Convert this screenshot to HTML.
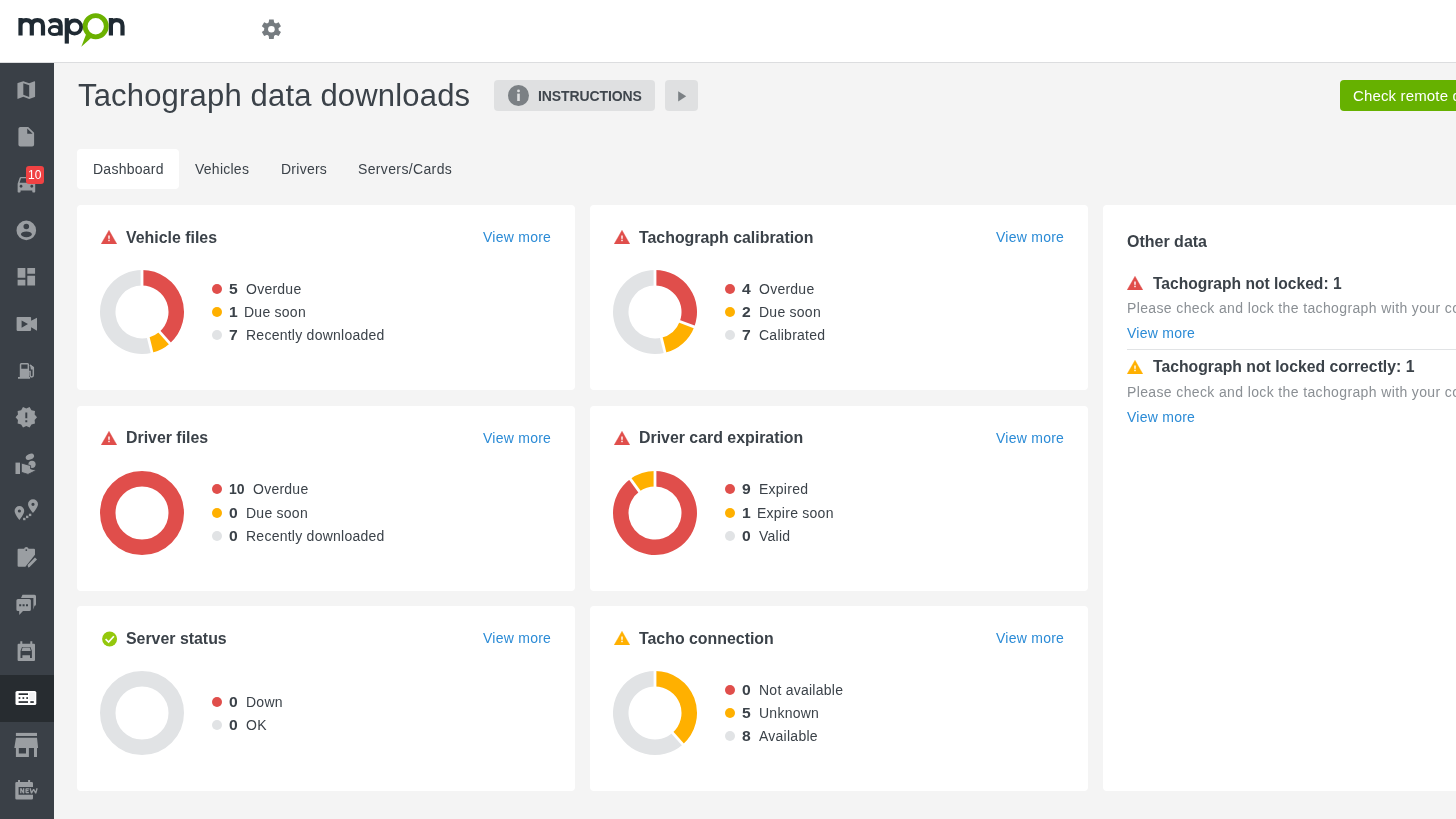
<!DOCTYPE html>
<html><head><meta charset="utf-8">
<style>
*{box-sizing:border-box;margin:0;padding:0}
html,body{width:1456px;height:819px;overflow:hidden;background:#f4f4f4;font-family:"Liberation Sans",sans-serif;color:#3b4249}
.abs{position:absolute}
#hdr{position:absolute;left:0;top:0;width:1456px;height:63px;background:#fff;border-bottom:1px solid #dcdddf}
#side{position:absolute;left:0;top:63px;width:54px;height:756px;background:#3a4047}
#active{position:absolute;left:0;top:675px;width:54px;height:47px;background:#272c30}
.t{position:absolute;white-space:nowrap;line-height:1;will-change:transform}
.card{position:absolute;background:#fff;border-radius:4px;width:498px;height:185px;overflow:hidden}
.vm{font-size:14px;color:#2b8bd6;letter-spacing:.25px}
.grey{font-size:14px;color:#8a8f94;letter-spacing:.37px}
.donut{position:absolute;left:22.4px;top:64px}
.si{position:absolute;left:0;width:54px;height:30px}
</style></head>
<body>
<div id="hdr"></div>

<!-- logo -->
<svg class="abs" style="left:0;top:0" width="140" height="60" viewBox="0 0 140 60">
<g fill="none" stroke="#1f2a33" stroke-width="4.2">
<path d="M20.5 35.5V18.1M20.5 26C20.5 21.5 23 20.2 26.15 20.2S31.8 21.5 31.8 26V35.5M31.8 26C31.8 21.5 34.3 20.2 37.4 20.2S43 21.5 43 26V35.5"/>
<path d="M49.3 22C51 20.7 53 20.2 55 20.2C58.7 20.2 60.65 22 60.65 25.5V35.5"/>
<path d="M66.8 18.1V43.6"/>
<path d="M110.9 35.5V18.1M110.9 26C110.9 21.5 113.4 20.2 116.6 20.2S122.5 21.5 122.5 26V35.5"/>
</g>
<ellipse cx="54.6" cy="30.6" rx="5.3" ry="4" fill="none" stroke="#1f2a33" stroke-width="3"/>
<circle cx="74.6" cy="27.1" r="6.6" fill="none" stroke="#1f2a33" stroke-width="3.8"/>
<path d="M86 34.5L81.3 46.7L91 38Z" fill="#6bb100"/>
<circle cx="95.7" cy="26.3" r="10.6" fill="none" stroke="#6bb100" stroke-width="4.8"/>
</svg>

<!-- gear -->
<svg class="abs" style="left:261px;top:19px" width="21" height="21" viewBox="0 0 21 21">
<g transform="translate(10.4 10.2)" fill="#767c80">
<circle r="7.2"/>
<path d="M-2.3 -9.7H2.3L2.9 -5H-2.9ZM-2.3 9.7H2.3L2.9 5H-2.9Z"/>
<path d="M-2.3 -9.7H2.3L2.9 -5H-2.9ZM-2.3 9.7H2.3L2.9 5H-2.9Z" transform="rotate(60)"/>
<path d="M-2.3 -9.7H2.3L2.9 -5H-2.9ZM-2.3 9.7H2.3L2.9 5H-2.9Z" transform="rotate(120)"/>
<circle r="3.3" fill="#fff"/>
</g>
</svg>

<div id="side"></div>
<div id="active"></div>

<!-- sidebar icons -->
<svg class="abs" style="left:0;top:63px" width="54" height="756" viewBox="0 63 54 756">
<g fill="#9a9ea2">
<!-- 0 map -->
<path transform="translate(14.5 78.3) scale(0.98)" d="M20.5 3l-.16.03L15 5.1 9 3 3.36 4.9c-.21.07-.36.25-.36.48V20.5c0 .28.22.5.5.5l.16-.03L9 18.9l6 2.1 5.64-1.9c.21-.07.36-.25.36-.48V3.5c0-.28-.22-.5-.5-.5zM15 19l-6-2.11V5l6 2.11V19z"/>
<!-- 1 file -->
<path transform="translate(14.5 125) scale(0.98)" d="M6 2c-1.1 0-1.99.9-1.99 2L4 20c0 1.1.89 2 1.99 2H18c1.1 0 2-.9 2-2V8l-6-6H6zm7 7V3.5L18.5 9H13z"/>
<!-- 2 car -->
<path transform="translate(14.7 172) scale(0.977)" d="M18.92 6.01C18.72 5.42 18.16 5 17.5 5h-11c-.66 0-1.21.42-1.42 1.01L3 12v8c0 .55.45 1 1 1h1c.55 0 1-.45 1-1v-1h12v1c0 .55.45 1 1 1h1c.55 0 1-.45 1-1v-8l-2.08-5.99zM6.5 16c-.83 0-1.5-.67-1.5-1.5S5.67 13 6.5 13s1.5.67 1.5 1.5S7.33 16 6.5 16zm11 0c-.83 0-1.5-.67-1.5-1.5s.67-1.5 1.5-1.5 1.5.67 1.5 1.5-.67 1.5-1.5 1.5zM5 11l1.5-4.5h11L19 11H5z"/>
<!-- 3 account -->
<path fill-rule="evenodd" d="M26.3 220.6a9.8 9.8 0 1 1 0 19.6a9.8 9.8 0 1 1 0-19.6zM26.3 223.7a2.8 2.8 0 1 0 0 5.6a2.8 2.8 0 1 0 0-5.6zM26.4 231.4a5.5 2.9 0 1 0 0 5.8a5.5 2.9 0 1 0 0-5.8z"/>
<!-- 4 dashboard -->
<path transform="translate(14.7 265.1) scale(0.97)" d="M3 13h8V3H3v10zm0 8h8v-6H3v6zm10 0h8V11h-8v10zm0-18v6h8V3h-8z"/>
<!-- 5 video -->
<path fill-rule="evenodd" d="M17.4 317h12.9a0.8 0.8 0 0 1 .8.8v3L37 317.8V330.7L31.1 327.3v2.8a.8.8 0 0 1-.8.8H17.4a.8.8 0 0 1-.8-.8V317.8a.8.8 0 0 1 .8-.8zM21.6 320.5V327.7L28 324.1Z"/>
<!-- 6 fuel -->
<path fill-rule="evenodd" d="M21.3 363h6.3a1.5 1.5 0 0 1 1.5 1.5V377h1V378.8H18V377h1.8V364.5a1.5 1.5 0 0 1 1.5-1.5zM21.3 364.5V368.8H27.6V364.5Z"/>
<path d="M29.9 365L33.3 367.6V375.3a1.6 1.6 0 0 1-3.2 0V371.5H29.1" fill="none" stroke="#9a9ea2" stroke-width="1.5"/>
<path d="M30.2 364.6L34 367.3V369.5L30.8 369.5Z"/>
<!-- 7 badge -->
<path transform="translate(14.6 405.6) scale(0.975)" d="M23 12l-2.44-2.78.34-3.68-3.61-.82-1.89-3.18L12 3 8.6 1.54 6.71 4.72l-3.61.81.34 3.68L1 12l2.44 2.78-.34 3.69 3.61.82 1.89 3.18L12 21l3.4 1.46 1.89-3.18 3.61-.82-.34-3.68L23 12zm-10 5h-2v-2h2v2zm0-4h-2V7h2v6z"/>
<!-- 8 hand coin -->
<rect x="15.5" y="462.6" width="4.5" height="11.4"/>
<circle cx="32" cy="464.3" r="3.6"/>
<path d="M21.3 463L30.6 465.6V468.8L36.4 470.3L28 474.4L21.3 472.3Z" stroke="#3a4047" stroke-width="0.9"/>
<ellipse cx="29.9" cy="456.8" rx="4.4" ry="2.8" transform="rotate(-25 29.9 456.8)"/>
<!-- 9 pins -->
<path fill-rule="evenodd" d="M19.4 506.1a4.8 4.8 0 0 1 4.8 4.8c0 3-4.8 9.1-4.8 9.1s-4.8-6.1-4.8-9.1a4.8 4.8 0 0 1 4.8-4.8zM19.4 509.4a1.6 1.6 0 1 0 0 3.2a1.6 1.6 0 1 0 0-3.2z"/>
<path fill-rule="evenodd" d="M33 499.3a5 5 0 0 1 5 5c0 3.1-5 8.7-5 8.7s-5-5.6-5-8.7a5 5 0 0 1 5-5zM33 502.7a1.6 1.6 0 1 0 0 3.2a1.6 1.6 0 1 0 0-3.2z"/>
<rect x="23.1" y="517.8" width="2.4" height="2.4"/>
<rect x="26" y="515.7" width="2.4" height="2.4"/>
<rect x="28.9" y="513.7" width="2.4" height="2.4"/>
<!-- 10 clipboard -->
<path fill-rule="evenodd" d="M18.6 548.8H24.1a2.3 2.3 0 0 1 4.5 0H34a1 1 0 0 1 1 1V554.7L25.4 566.8H18.6a1 1 0 0 1-1-1V549.8a1 1 0 0 1 1-1zM26.3 549.2a.9 .9 0 1 0 0 1.8a.9 .9 0 1 0 0-1.8z"/>
<path d="M28.2 567.4L27.6 565L35 557.6L37 559.6L29.6 567Z"/>
<!-- 11 chat -->
<path d="M22.5 594.8H34.5a1.5 1.5 0 0 1 1.5 1.5V604.2a1.5 1.5 0 0 1-1.5 1.5L33.4 609.7V597.9H21Z"/>
<path fill-rule="evenodd" d="M18 598.9H29.3a1.6 1.6 0 0 1 1.6 1.6V609.4a1.6 1.6 0 0 1-1.6 1.6H23L19.2 615V611H18a1.6 1.6 0 0 1-1.6-1.6V600.5a1.6 1.6 0 0 1 1.6-1.6zM19.2 604.2v2h2v-2zM22.6 604.2v2h2v-2zM26 604.2v2h2v-2z"/>
<!-- 12 calendar car -->
<path fill-rule="evenodd" d="M18.6 643.8H20.3V641.3H22.3V643.8H30.3V641.3H32.3V643.8H34a1 1 0 0 1 1 1V660a1 1 0 0 1-1 1H18.6a1 1 0 0 1-1-1V644.8a1 1 0 0 1 1-1zM22 646.9L20.5 651V658H22.4V655.2H30V658H31.9V651L30.4 646.9Z"/>
<path d="M22.6 647.6H29.8L30.8 651H21.6Z"/>
<!-- 14 store -->
<rect x="15.9" y="732.9" width="21.1" height="3.1"/>
<path fill-rule="evenodd" d="M16 737.8H37L38.1 747.9H37V757H34V747.9H28.9V757H15.9V747.9H14.3ZM18.8 747.9V753.4H26V747.9Z"/>
<!-- 15 new calendar -->
<path fill-rule="evenodd" d="M16.6 782H18V779.9H20V782H28.1V779.9H30.1V782H31.7a1.3 1.3 0 0 1 1.3 1.3V786.9H18.6V794.7H33V798.3a1.3 1.3 0 0 1-1.3 1.3H16.6a1.3 1.3 0 0 1-1.3-1.3V783.3a1.3 1.3 0 0 1 1.3-1.3z"/>
<path d="M20.8 793.2V788.2L23.6 793.2V788.2M28.9 788.85H26.05V792.55H28.9M26.05 790.7H28.5M30.1 788.2L31.5 793.2L33.6 789.2L35.7 793.2L37.1 788.2" fill="none" stroke="#9a9ea2" stroke-width="1.3" stroke-linejoin="bevel"/>
</g>
<!-- 13 card active -->
<rect x="15.5" y="691" width="20.8" height="14" rx="1.6" fill="#fff"/>
<rect x="29" y="692.5" width="5.8" height="7.5" fill="#f1f2f3"/>
<g fill="#272c30">
<rect x="18.6" y="693.3" width="9.4" height="1.7"/>
<rect x="18.6" y="697.2" width="1.7" height="1.7"/>
<rect x="22.5" y="697.2" width="1.7" height="1.7"/>
<rect x="26.3" y="697.2" width="1.7" height="1.7"/>
<rect x="18.6" y="701.2" width="9.4" height="1.7"/>
<rect x="30.3" y="701.2" width="3.5" height="1.7"/>
</g>
</svg>
<!-- badge -->
<div class="abs" style="left:26px;top:166px;width:18px;height:18px;border-radius:3px;background:#f04243"></div>
<div class="t" style="left:28.2px;top:168.6px;font-size:12px;color:#fff">10</div>

<!-- title -->
<div class="t" style="left:78px;top:80.46px;font-size:31px;letter-spacing:.18px;color:#3b4249">Tachograph data downloads</div>

<!-- instructions button -->
<div class="abs" style="left:494px;top:80px;width:161px;height:31px;background:#dfe0e1;border-radius:4px"></div>
<div class="abs" style="left:665px;top:80px;width:33px;height:31px;background:#dfe0e1;border-radius:4px"></div>
<svg class="abs" style="left:507.5px;top:85px" width="21" height="21" viewBox="0 0 21 21">
<circle cx="10.5" cy="10.5" r="10.5" fill="#7b8084"/>
<rect x="9.2" y="8.6" width="2.6" height="7.4" fill="#dfe0e1"/>
<circle cx="10.5" cy="5.9" r="1.4" fill="#dfe0e1"/>
</svg>
<div class="t" style="left:538px;top:88.95px;font-size:14px;font-weight:700;color:#3f464d;letter-spacing:-.1px">INSTRUCTIONS</div>
<svg class="abs" style="left:678px;top:90.5px" width="9" height="11" viewBox="0 0 9 11"><path d="M0.2 0.2L8.2 5.3L0.2 10.4Z" fill="#7b8084"/></svg>

<!-- green button -->
<div class="abs" style="left:1340px;top:80px;width:160px;height:31px;background:#66b100;border-radius:4px"></div>
<div class="t" style="left:1352.5px;top:88.1px;font-size:15px;letter-spacing:.15px;color:#fff">Check remote data</div>

<!-- tabs -->
<div class="abs" style="left:77px;top:149px;width:102px;height:40px;background:#fff;border-radius:4px"></div>
<div class="t" style="left:93px;top:162.35px;font-size:14px;letter-spacing:.25px;color:#3b4249">Dashboard</div>
<div class="t" style="left:195px;top:162.35px;font-size:14px;letter-spacing:.25px;color:#3b4249">Vehicles</div>
<div class="t" style="left:280.5px;top:162.35px;font-size:14px;letter-spacing:.25px;color:#3b4249">Drivers</div>
<div class="t" style="left:357.5px;top:162.35px;font-size:14px;letter-spacing:.36px;color:#3b4249">Servers/Cards</div>

<div class="card" style="left:77px;top:205px">
<svg class="abs" style="left:24px;top:25px" width="16" height="14" viewBox="0 0 16 14"><path d="M8 0.3L15.8 13.9H0.2Z" fill="#e04e4b" stroke="#e04e4b" stroke-width="0.4" stroke-linejoin="round"/><rect x="7.3" y="5.5" width="1.4" height="3.3" fill="#fff"/><rect x="7.3" y="9.7" width="1.4" height="1.5" fill="#fff"/></svg>
<div class="t" style="left:49px;top:24.74px;font-size:15.9px;font-weight:700;color:#3b4249">Vehicle files</div>
<div class="t vm" style="right:24px;top:25.45px">View more</div>
<svg class="donut" width="86" height="86" viewBox="0 0 86 86"><path d="M43.00 1.00A42 42 0 0 1 70.85 74.44L60.57 62.84A26.5 26.5 0 0 0 43.00 16.50Z" fill="#e04e4b"/><path d="M70.85 74.44A42 42 0 0 1 53.05 83.78L49.34 68.73A26.5 26.5 0 0 0 60.57 62.84Z" fill="#ffb000"/><path d="M53.05 83.78A42 42 0 1 1 43.00 1.00L43.00 16.50A26.5 26.5 0 1 0 49.34 68.73Z" fill="#e1e3e5"/><line x1="43.00" y1="18.50" x2="43.00" y2="-1.00" stroke="#fff" stroke-width="2.8"/><line x1="59.25" y1="61.34" x2="72.18" y2="75.93" stroke="#fff" stroke-width="2.8"/><line x1="48.86" y1="66.79" x2="53.53" y2="85.72" stroke="#fff" stroke-width="2.8"/></svg>
<div class="abs" style="left:134.7px;top:78.5px;width:10px;height:10px;border-radius:50%;background:#e04e4b"></div>
<div class="t" style="left:152.3px;top:76.55px;font-size:14px;font-weight:700;color:#3b4249;transform:scaleX(1.12);transform-origin:0 0">5</div>
<div class="t" style="left:168.5px;top:76.55px;font-size:14px;letter-spacing:.25px;color:#3b4249">Overdue</div>
<div class="abs" style="left:134.7px;top:102px;width:10px;height:10px;border-radius:50%;background:#ffb000"></div>
<div class="t" style="left:152.3px;top:100.05px;font-size:14px;font-weight:700;color:#3b4249;transform:scaleX(1.12);transform-origin:0 0">1</div>
<div class="t" style="left:166.5px;top:100.05px;font-size:14px;letter-spacing:.25px;color:#3b4249">Due soon</div>
<div class="abs" style="left:134.7px;top:125.4px;width:10px;height:10px;border-radius:50%;background:#e1e3e5"></div>
<div class="t" style="left:152.3px;top:123.45px;font-size:14px;font-weight:700;color:#3b4249;transform:scaleX(1.12);transform-origin:0 0">7</div>
<div class="t" style="left:168.5px;top:123.45px;font-size:14px;letter-spacing:.25px;color:#3b4249">Recently downloaded</div>
</div>
<div class="card" style="left:590px;top:205px">
<svg class="abs" style="left:24px;top:25px" width="16" height="14" viewBox="0 0 16 14"><path d="M8 0.3L15.8 13.9H0.2Z" fill="#e04e4b" stroke="#e04e4b" stroke-width="0.4" stroke-linejoin="round"/><rect x="7.3" y="5.5" width="1.4" height="3.3" fill="#fff"/><rect x="7.3" y="9.7" width="1.4" height="1.5" fill="#fff"/></svg>
<div class="t" style="left:49px;top:24.74px;font-size:15.9px;font-weight:700;color:#3b4249">Tachograph calibration</div>
<div class="t vm" style="right:24px;top:25.45px">View more</div>
<svg class="donut" width="86" height="86" viewBox="0 0 86 86"><path d="M43.00 1.00A42 42 0 0 1 82.27 57.89L67.78 52.40A26.5 26.5 0 0 0 43.00 16.50Z" fill="#e04e4b"/><path d="M82.27 57.89A42 42 0 0 1 53.05 83.78L49.34 68.73A26.5 26.5 0 0 0 67.78 52.40Z" fill="#ffb000"/><path d="M53.05 83.78A42 42 0 1 1 43.00 1.00L43.00 16.50A26.5 26.5 0 1 0 49.34 68.73Z" fill="#e1e3e5"/><line x1="43.00" y1="18.50" x2="43.00" y2="-1.00" stroke="#fff" stroke-width="2.8"/><line x1="65.91" y1="51.69" x2="84.14" y2="58.60" stroke="#fff" stroke-width="2.8"/><line x1="48.86" y1="66.79" x2="53.53" y2="85.72" stroke="#fff" stroke-width="2.8"/></svg>
<div class="abs" style="left:134.7px;top:78.5px;width:10px;height:10px;border-radius:50%;background:#e04e4b"></div>
<div class="t" style="left:152.3px;top:76.55px;font-size:14px;font-weight:700;color:#3b4249;transform:scaleX(1.12);transform-origin:0 0">4</div>
<div class="t" style="left:168.5px;top:76.55px;font-size:14px;letter-spacing:.25px;color:#3b4249">Overdue</div>
<div class="abs" style="left:134.7px;top:102px;width:10px;height:10px;border-radius:50%;background:#ffb000"></div>
<div class="t" style="left:152.3px;top:100.05px;font-size:14px;font-weight:700;color:#3b4249;transform:scaleX(1.12);transform-origin:0 0">2</div>
<div class="t" style="left:168.5px;top:100.05px;font-size:14px;letter-spacing:.25px;color:#3b4249">Due soon</div>
<div class="abs" style="left:134.7px;top:125.4px;width:10px;height:10px;border-radius:50%;background:#e1e3e5"></div>
<div class="t" style="left:152.3px;top:123.45px;font-size:14px;font-weight:700;color:#3b4249;transform:scaleX(1.12);transform-origin:0 0">7</div>
<div class="t" style="left:168.5px;top:123.45px;font-size:14px;letter-spacing:.25px;color:#3b4249">Calibrated</div>
</div>
<div class="card" style="left:77px;top:405.5px">
<svg class="abs" style="left:24px;top:25px" width="16" height="14" viewBox="0 0 16 14"><path d="M8 0.3L15.8 13.9H0.2Z" fill="#e04e4b" stroke="#e04e4b" stroke-width="0.4" stroke-linejoin="round"/><rect x="7.3" y="5.5" width="1.4" height="3.3" fill="#fff"/><rect x="7.3" y="9.7" width="1.4" height="1.5" fill="#fff"/></svg>
<div class="t" style="left:49px;top:24.74px;font-size:15.9px;font-weight:700;color:#3b4249">Driver files</div>
<div class="t vm" style="right:24px;top:25.45px">View more</div>
<svg class="donut" width="86" height="86" viewBox="0 0 86 86"><circle cx="43" cy="43" r="34.25" fill="none" stroke="#e04e4b" stroke-width="15.5"/></svg>
<div class="abs" style="left:134.7px;top:78.5px;width:10px;height:10px;border-radius:50%;background:#e04e4b"></div>
<div class="t" style="left:152.3px;top:76.55px;font-size:14px;font-weight:700;color:#3b4249">10</div>
<div class="t" style="left:175.5px;top:76.55px;font-size:14px;letter-spacing:.25px;color:#3b4249">Overdue</div>
<div class="abs" style="left:134.7px;top:102px;width:10px;height:10px;border-radius:50%;background:#ffb000"></div>
<div class="t" style="left:152.3px;top:100.05px;font-size:14px;font-weight:700;color:#3b4249;transform:scaleX(1.12);transform-origin:0 0">0</div>
<div class="t" style="left:168.5px;top:100.05px;font-size:14px;letter-spacing:.25px;color:#3b4249">Due soon</div>
<div class="abs" style="left:134.7px;top:125.4px;width:10px;height:10px;border-radius:50%;background:#e1e3e5"></div>
<div class="t" style="left:152.3px;top:123.45px;font-size:14px;font-weight:700;color:#3b4249;transform:scaleX(1.12);transform-origin:0 0">0</div>
<div class="t" style="left:168.5px;top:123.45px;font-size:14px;letter-spacing:.25px;color:#3b4249">Recently downloaded</div>
</div>
<div class="card" style="left:590px;top:405.5px">
<svg class="abs" style="left:24px;top:25px" width="16" height="14" viewBox="0 0 16 14"><path d="M8 0.3L15.8 13.9H0.2Z" fill="#e04e4b" stroke="#e04e4b" stroke-width="0.4" stroke-linejoin="round"/><rect x="7.3" y="5.5" width="1.4" height="3.3" fill="#fff"/><rect x="7.3" y="9.7" width="1.4" height="1.5" fill="#fff"/></svg>
<div class="t" style="left:49px;top:24.74px;font-size:15.9px;font-weight:700;color:#3b4249">Driver card expiration</div>
<div class="t vm" style="right:24px;top:25.45px">View more</div>
<svg class="donut" width="86" height="86" viewBox="0 0 86 86"><path d="M43.00 1.00A42 42 0 1 1 18.31 9.02L27.42 21.56A26.5 26.5 0 1 0 43.00 16.50Z" fill="#e04e4b"/><path d="M18.31 9.02A42 42 0 0 1 43.00 1.00L43.00 16.50A26.5 26.5 0 0 0 27.42 21.56Z" fill="#ffb000"/><line x1="43.00" y1="18.50" x2="43.00" y2="-1.00" stroke="#fff" stroke-width="2.8"/><line x1="28.60" y1="23.18" x2="17.14" y2="7.40" stroke="#fff" stroke-width="2.8"/></svg>
<div class="abs" style="left:134.7px;top:78.5px;width:10px;height:10px;border-radius:50%;background:#e04e4b"></div>
<div class="t" style="left:152.3px;top:76.55px;font-size:14px;font-weight:700;color:#3b4249;transform:scaleX(1.12);transform-origin:0 0">9</div>
<div class="t" style="left:168.5px;top:76.55px;font-size:14px;letter-spacing:.25px;color:#3b4249">Expired</div>
<div class="abs" style="left:134.7px;top:102px;width:10px;height:10px;border-radius:50%;background:#ffb000"></div>
<div class="t" style="left:152.3px;top:100.05px;font-size:14px;font-weight:700;color:#3b4249;transform:scaleX(1.12);transform-origin:0 0">1</div>
<div class="t" style="left:166.5px;top:100.05px;font-size:14px;letter-spacing:.25px;color:#3b4249">Expire soon</div>
<div class="abs" style="left:134.7px;top:125.4px;width:10px;height:10px;border-radius:50%;background:#e1e3e5"></div>
<div class="t" style="left:152.3px;top:123.45px;font-size:14px;font-weight:700;color:#3b4249;transform:scaleX(1.12);transform-origin:0 0">0</div>
<div class="t" style="left:168.5px;top:123.45px;font-size:14px;letter-spacing:.25px;color:#3b4249">Valid</div>
</div>
<div class="card" style="left:77px;top:606px">
<svg class="abs" style="left:25px;top:25.3px" width="16" height="16" viewBox="0 0 16 16"><circle cx="7.6" cy="8" r="7.5" fill="#94c80c"/><path d="M3.6 8.2L6.6 11L11.9 5.2" fill="none" stroke="#fff" stroke-width="1.7"/></svg>
<div class="t" style="left:49px;top:24.74px;font-size:15.9px;font-weight:700;color:#3b4249">Server status</div>
<div class="t vm" style="right:24px;top:25.45px">View more</div>
<svg class="donut" width="86" height="86" viewBox="0 0 86 86"><circle cx="43" cy="43" r="34.25" fill="none" stroke="#e1e3e5" stroke-width="15.5"/></svg>
<div class="abs" style="left:134.7px;top:90.8px;width:10px;height:10px;border-radius:50%;background:#e04e4b"></div>
<div class="t" style="left:152.3px;top:88.85px;font-size:14px;font-weight:700;color:#3b4249;transform:scaleX(1.12);transform-origin:0 0">0</div>
<div class="t" style="left:168.5px;top:88.85px;font-size:14px;letter-spacing:.25px;color:#3b4249">Down</div>
<div class="abs" style="left:134.7px;top:114px;width:10px;height:10px;border-radius:50%;background:#e1e3e5"></div>
<div class="t" style="left:152.3px;top:112.05px;font-size:14px;font-weight:700;color:#3b4249;transform:scaleX(1.12);transform-origin:0 0">0</div>
<div class="t" style="left:168.5px;top:112.05px;font-size:14px;letter-spacing:.25px;color:#3b4249">OK</div>
</div>
<div class="card" style="left:590px;top:606px">
<svg class="abs" style="left:24px;top:25px" width="16" height="14" viewBox="0 0 16 14"><path d="M8 0.3L15.8 13.9H0.2Z" fill="#ffb000" stroke="#ffb000" stroke-width="0.4" stroke-linejoin="round"/><rect x="7.3" y="5.5" width="1.4" height="3.3" fill="#fff"/><rect x="7.3" y="9.7" width="1.4" height="1.5" fill="#fff"/></svg>
<div class="t" style="left:49px;top:24.74px;font-size:15.9px;font-weight:700;color:#3b4249">Tacho connection</div>
<div class="t vm" style="right:24px;top:25.45px">View more</div>
<svg class="donut" width="86" height="86" viewBox="0 0 86 86"><path d="M43.00 1.00A42 42 0 0 1 70.85 74.44L60.57 62.84A26.5 26.5 0 0 0 43.00 16.50Z" fill="#ffb000"/><path d="M70.85 74.44A42 42 0 1 1 43.00 1.00L43.00 16.50A26.5 26.5 0 1 0 60.57 62.84Z" fill="#e1e3e5"/><line x1="43.00" y1="18.50" x2="43.00" y2="-1.00" stroke="#fff" stroke-width="2.8"/><line x1="59.25" y1="61.34" x2="72.18" y2="75.93" stroke="#fff" stroke-width="2.8"/></svg>
<div class="abs" style="left:134.7px;top:78.5px;width:10px;height:10px;border-radius:50%;background:#e04e4b"></div>
<div class="t" style="left:152.3px;top:76.55px;font-size:14px;font-weight:700;color:#3b4249;transform:scaleX(1.12);transform-origin:0 0">0</div>
<div class="t" style="left:168.5px;top:76.55px;font-size:14px;letter-spacing:.25px;color:#3b4249">Not available</div>
<div class="abs" style="left:134.7px;top:102px;width:10px;height:10px;border-radius:50%;background:#ffb000"></div>
<div class="t" style="left:152.3px;top:100.05px;font-size:14px;font-weight:700;color:#3b4249;transform:scaleX(1.12);transform-origin:0 0">5</div>
<div class="t" style="left:168.5px;top:100.05px;font-size:14px;letter-spacing:.25px;color:#3b4249">Unknown</div>
<div class="abs" style="left:134.7px;top:125.4px;width:10px;height:10px;border-radius:50%;background:#e1e3e5"></div>
<div class="t" style="left:152.3px;top:123.45px;font-size:14px;font-weight:700;color:#3b4249;transform:scaleX(1.12);transform-origin:0 0">8</div>
<div class="t" style="left:168.5px;top:123.45px;font-size:14px;letter-spacing:.25px;color:#3b4249">Available</div>
</div>
<div class="card" style="left:1103px;top:205px;height:586px;width:520px">
<div class="t" style="left:24px;top:28.86px;font-size:16px;font-weight:700;color:#3b4249">Other data</div>
<svg class="abs" style="left:24px;top:71.3px" width="16" height="14" viewBox="0 0 16 14"><path d="M8 0.3L15.8 13.9H0.2Z" fill="#e04e4b" stroke="#e04e4b" stroke-width="0.4" stroke-linejoin="round"/><rect x="7.3" y="5.5" width="1.4" height="3.3" fill="#fff"/><rect x="7.3" y="9.7" width="1.4" height="1.5" fill="#fff"/></svg>
<div class="t" style="left:49.5px;top:70.99px;font-size:15.6px;font-weight:700;color:#3b4249">Tachograph not locked: 1</div>
<div class="t grey" style="left:24px;top:96.45px">Please check and lock the tachograph with your company card</div>
<div class="t vm" style="left:24px;top:120.75px">View more</div>
<div class="abs" style="left:24px;top:143.6px;width:600px;height:1px;background:#e1e3e5"></div>
<svg class="abs" style="left:24px;top:155.4px" width="16" height="14" viewBox="0 0 16 14"><path d="M8 0.3L15.8 13.9H0.2Z" fill="#ffb000" stroke="#ffb000" stroke-width="0.4" stroke-linejoin="round"/><rect x="7.3" y="5.5" width="1.4" height="3.3" fill="#fff"/><rect x="7.3" y="9.7" width="1.4" height="1.5" fill="#fff"/></svg>
<div class="t" style="left:49.5px;top:154.47px;font-size:15.75px;font-weight:700;color:#3b4249">Tachograph not locked correctly: 1</div>
<div class="t grey" style="left:24px;top:180.45px">Please check and lock the tachograph with your company card</div>
<div class="t vm" style="left:24px;top:204.65px">View more</div>
</div>

</body></html>
